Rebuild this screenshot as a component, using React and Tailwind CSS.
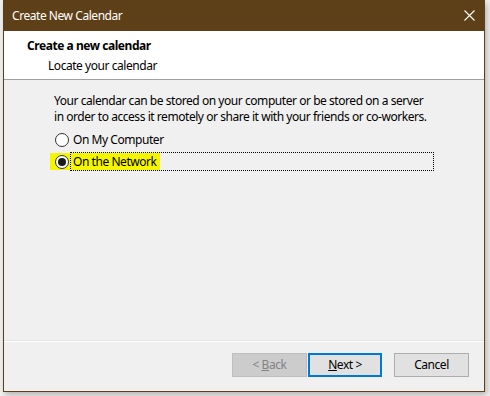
import React from "react";

const font = { fontFamily: '"Noto Sans", "Liberation Sans", sans-serif' };

function Radio({ checked }) {
  return (
    <span className="w-[14px] h-[14px] rounded-full border border-[#333] bg-white flex items-center justify-center shrink-0">
      {checked && <span className="w-[8px] h-[8px] rounded-full bg-[#1a1a1a]" />}
    </span>
  );
}

export default function App() {
  return (
    <div className="w-[490px] h-[396px] bg-[#f0f0f0] text-[12px] tracking-[-0.45px] text-black overflow-hidden" style={font}>
      <div className="ml-[3px] w-[482px] h-[392px] flex flex-col border-x border-b border-[#5e4018] shadow-[2px_3px_6px_rgba(0,0,0,0.25)]">
        <div className="h-[31px] bg-[#5e4018] text-white flex items-center justify-between pl-[8px] pr-[9px] shrink-0">
          <span className="leading-none">Create New Calendar</span>
          <svg width="11" height="11" viewBox="0 0 11 11" aria-hidden="true">
            <path d="M0.5 0.5 L10.5 10.5 M10.5 0.5 L0.5 10.5" stroke="#fff" strokeWidth="1.1" fill="none" />
          </svg>
        </div>

        <div className="h-[49px] bg-white border-b border-[#a0a0a0] shrink-0 pt-[7px] pl-[23px]">
          <div className="font-bold leading-[16px]">Create a new calendar</div>
          <div className="pl-[21px] mt-[4px] leading-[16px]">Locate your calendar</div>
        </div>

        <div className="flex-1 flex flex-col bg-[#f0f0f0]">
          <div className="pt-[13px] pl-[50px] pr-[20px] leading-[16px]">
            <p>Your calendar can be stored on your computer or be stored on a server</p>
            <p>in order to access it remotely or share it with your friends or co-workers.</p>
          </div>
          <div className="pl-[46px] mt-[5px] flex flex-col">
            <div className="h-[19px] flex items-center">
              <span className="pl-[5px] pr-[1px] flex items-center">
                <Radio />
              </span>
              <span className="pl-[3px] leading-none">On My Computer</span>
            </div>
            <div className="h-[19px] mt-[3px] flex items-center">
              <span className="h-[17px] pl-[5px] pr-[1px] bg-[#f5f500] flex items-center">
                <Radio checked />
              </span>
              <div className="h-[19px] w-[364px] border border-dotted border-black flex items-stretch">
                <span className="bg-[#f5f500] pl-[2px] pr-[3px] flex items-center leading-none">On the Network</span>
              </div>
            </div>
          </div>

          <div className="mt-auto border-t border-[#e3e3e3]">
            <div className="border-t border-white h-[50px] flex items-start justify-end pt-[11px] pr-[15px]">
              <button className="w-[75px] h-[24px] bg-[#cccccc] border border-[#bfbfbf] text-[#838383]">
                &lt; <span className="underline">B</span>ack
              </button>
              <button className="ml-[1px] w-[74px] h-[24px] bg-[#e1e1e1] border-2 border-[#0078d7]">
                <span className="underline">N</span>ext &gt;
              </button>
              <button className="ml-[12px] w-[75px] h-[24px] bg-[#e1e1e1] border border-[#adadad]">
                Cancel
              </button>
            </div>
          </div>
        </div>
      </div>
    </div>
  );
}
